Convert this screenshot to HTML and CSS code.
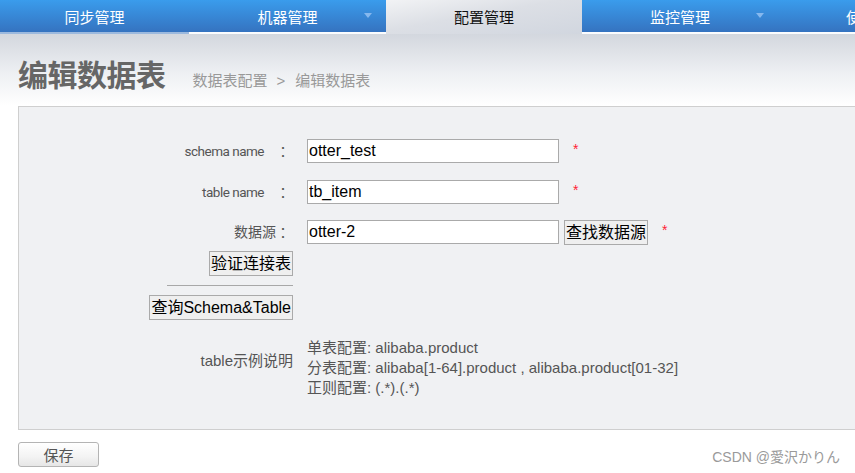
FILE: index.html
```html
<!DOCTYPE html>
<html lang="zh-CN">
<head>
<meta charset="utf-8">
<title>编辑数据表</title>
<link rel="stylesheet" href="styles.css">
</head>
<body>
<nav class="nav">
  <div class="tab tab-first"><span>同步管理</span></div>
  <div class="tab tab-w197"><span>机器管理</span><i class="arrow"></i></div>
  <div class="tab tab-active"><span>配置管理</span></div>
  <div class="tab"><span>监控管理</span><i class="arrow"></i></div>
  <div class="tab"><span>使用手册</span></div>
</nav>
<header class="head">
  <h1 class="title">编辑数据表</h1>
  <div class="crumb">数据表配置<span class="gt">&gt;</span>编辑数据表</div>
</header>
<section class="box">
  <div class="row row-first">
    <div class="label"><span class="lt">schema name</span><span class="colon sp">：</span></div>
    <div class="field"><input class="txt" type="text" value="otter_test"><span class="req">*</span></div>
  </div>
  <div class="row row-gap2">
    <div class="label"><span class="lt">table name</span><span class="colon sp">：</span></div>
    <div class="field"><input class="txt" type="text" value="tb_item"><span class="req">*</span></div>
  </div>
  <div class="row row-gap">
    <div class="label">数据源<span class="colon">：</span></div>
    <div class="field"><input class="txt" type="text" value="otter-2"><button class="btn btn-tight" type="button">查找数据源</button><span class="req">*</span></div>
  </div>
  <div class="row row-btn">
    <div class="cell-r"><button class="btn" type="button">验证连接表</button></div>
  </div>
  <div class="row row-hr">
    <div class="cell-r"><hr class="sep"></div>
  </div>
  <div class="row row-btn2">
    <div class="cell-r"><button class="btn" type="button">查询Schema&amp;Table</button></div>
  </div>
  <div class="row row-ex">
    <div class="label label-ex">table示例说明</div>
    <div class="ex">
      <div>单表配置: alibaba.product</div>
      <div>分表配置: alibaba[1-64].product , alibaba.product[01-32]</div>
      <div>正则配置: (.*).(.*)</div>
    </div>
  </div>
</section>
<div class="actions">
  <button class="save" type="button">保存</button>
</div>
<div class="mark">CSDN @愛沢かりん</div>
</body>
</html>
```
FILE: styles.css
```css
html, body {
  margin: 0;
  padding: 0;
  overflow: hidden;
}
body {
  width: 855px;
  height: 473px;
  position: relative;
  background: #fff;
  font-family: "Liberation Sans", "Noto Sans CJK SC", sans-serif;
  color: #555;
}
.nav {
  display: flex;
  height: 34px;
  background: linear-gradient(#3a9cec, #3573c0 94%);
  white-space: nowrap;
}
.tab {
  position: relative;
  flex: 0 0 196px;
  height: 32px;
  border-bottom: 2px solid #fbfcfe;
  display: flex;
  align-items: center;
  justify-content: center;
  color: #fff;
  font-size: 15px;
  font-family: "Noto Sans CJK SC", sans-serif;
}
.tab span { line-height: 32px; padding-top: 2px; }
.tab-first {
  flex-basis: 189px;
  border-bottom-color: #9cb9de;
}
.tab-w197 { flex-basis: 197px; }
.tab-active {
  height: 34px;
  border-bottom: 0;
  color: #111;
  background: linear-gradient(170deg, #f2f3f5 0%, #dcdfe5 45%, #d1d6df 100%);
}
.tab-active span { padding-top: 0; }
.arrow {
  position: absolute;
  right: 14px;
  top: 13px;
  width: 0;
  height: 0;
  border-left: 4px solid transparent;
  border-right: 4px solid transparent;
  border-top: 5px solid #86b8ee;
}
.head {
  display: flex;
  align-items: baseline;
  padding: 17px 18px 0;
  height: 55px;
  background: linear-gradient(#d3d7de, #eef0f3 55%, #fff 100%);
}
.title {
  margin: 0;
  font-size: 30px;
  line-height: 44px;
  font-weight: bold;
  color: #666;
  font-family: "Noto Sans CJK SC", sans-serif;
  letter-spacing: -0.5px;
}
.crumb {
  margin-left: 27px;
  font-size: 15px;
  color: #999;
  font-family: "Noto Sans CJK SC", sans-serif;
}
.gt {
  margin: 0 10px 0 9px;
  font-family: "Liberation Sans", sans-serif;
}
.box {
  margin: 0 -40px 0 18px;
  border: 1px solid #cfcfcf;
  background: #f0f1f3;
  padding: 32px 0 31px;
}
.row {
  display: grid;
  grid-template-columns: 274px auto;
  column-gap: 14px;
  align-items: center;
}
.row-gap2 { margin-top: 17px; }
.row-gap { margin-top: 16px; }
.row-btn { margin-top: 7px; }
.row-hr { margin-top: 9px; }
.row-btn2 { margin-top: 9px; }
.row-ex { margin-top: 18px; align-items: start; }
.label {
  text-align: right;
  font-size: 14px;
  line-height: 24px;
  height: 24px;
  white-space: nowrap;
  color: #555;
  padding-right: 3px;
}
.lt {
  font-family: Roboto, "Liberation Sans", sans-serif;
  font-size: 13.5px;
  letter-spacing: -0.5px;
}
.cell-r {
  display: flex;
  justify-content: flex-end;
  align-items: center;
}
.colon {
  display: inline-block;
  width: 14px;
  height: 24px;
  line-height: 24px;
  vertical-align: top;
  text-align: center;
  font-family: "Noto Sans CJK TC", sans-serif;
}
.sp { margin-left: 12px; }
.label-ex {
  padding-top: 11px;
  padding-right: 0;
  font-size: 15px;
}
.field {
  display: flex;
  align-items: center;
  height: 24px;
}
.txt {
  box-sizing: border-box;
  width: 252px;
  height: 24px;
  margin: 0;
  padding: 0 1px;
  border: 1px solid #aaa;
  background: #fff;
  font-family: "Liberation Sans", "Noto Sans CJK SC", sans-serif;
  font-size: 16px;
  color: #000;
  outline: none;
}
.req {
  color: #f23;
  font-size: 14px;
  margin-left: 14px;
  position: relative;
  top: -2px;
}
.btn {
  box-sizing: border-box;
  height: 25px;
  margin: 0;
  padding: 0 1px;
  border: 1px solid #aaa;
  background: #efefef;
  font-family: "Liberation Sans", "Noto Sans CJK SC", sans-serif;
  font-size: 16px;
  line-height: 21px;
  color: #000;
}
.btn-tight { margin-left: 5px; }
.sep {
  width: 126px;
  margin: 0;
  border: 0;
  border-top: 1px solid #a8a8a8;
  height: 0;
}
.row-hr .cell-r { height: 1px; }
.ex {
  font-size: 15px;
  line-height: 20px;
  color: #555;
}
.actions {
  padding: 12px 18px 0;
}
.save {
  box-sizing: border-box;
  width: 81px;
  height: 25px;
  margin: 0;
  padding: 0;
  border: 1px solid #b4b4b4;
  border-radius: 3px;
  background: linear-gradient(#ffffff, #f3f3f3 60%, #e6e6e6);
  font-family: "Noto Sans CJK SC", sans-serif;
  font-size: 15px;
  line-height: 22px;
  color: #555;
}
.mark {
  position: absolute;
  right: 15px;
  bottom: 7px;
  font-size: 14px;
  color: #9a9a9a;
  font-family: "Liberation Sans", "Noto Sans CJK JP", sans-serif;
}
```
